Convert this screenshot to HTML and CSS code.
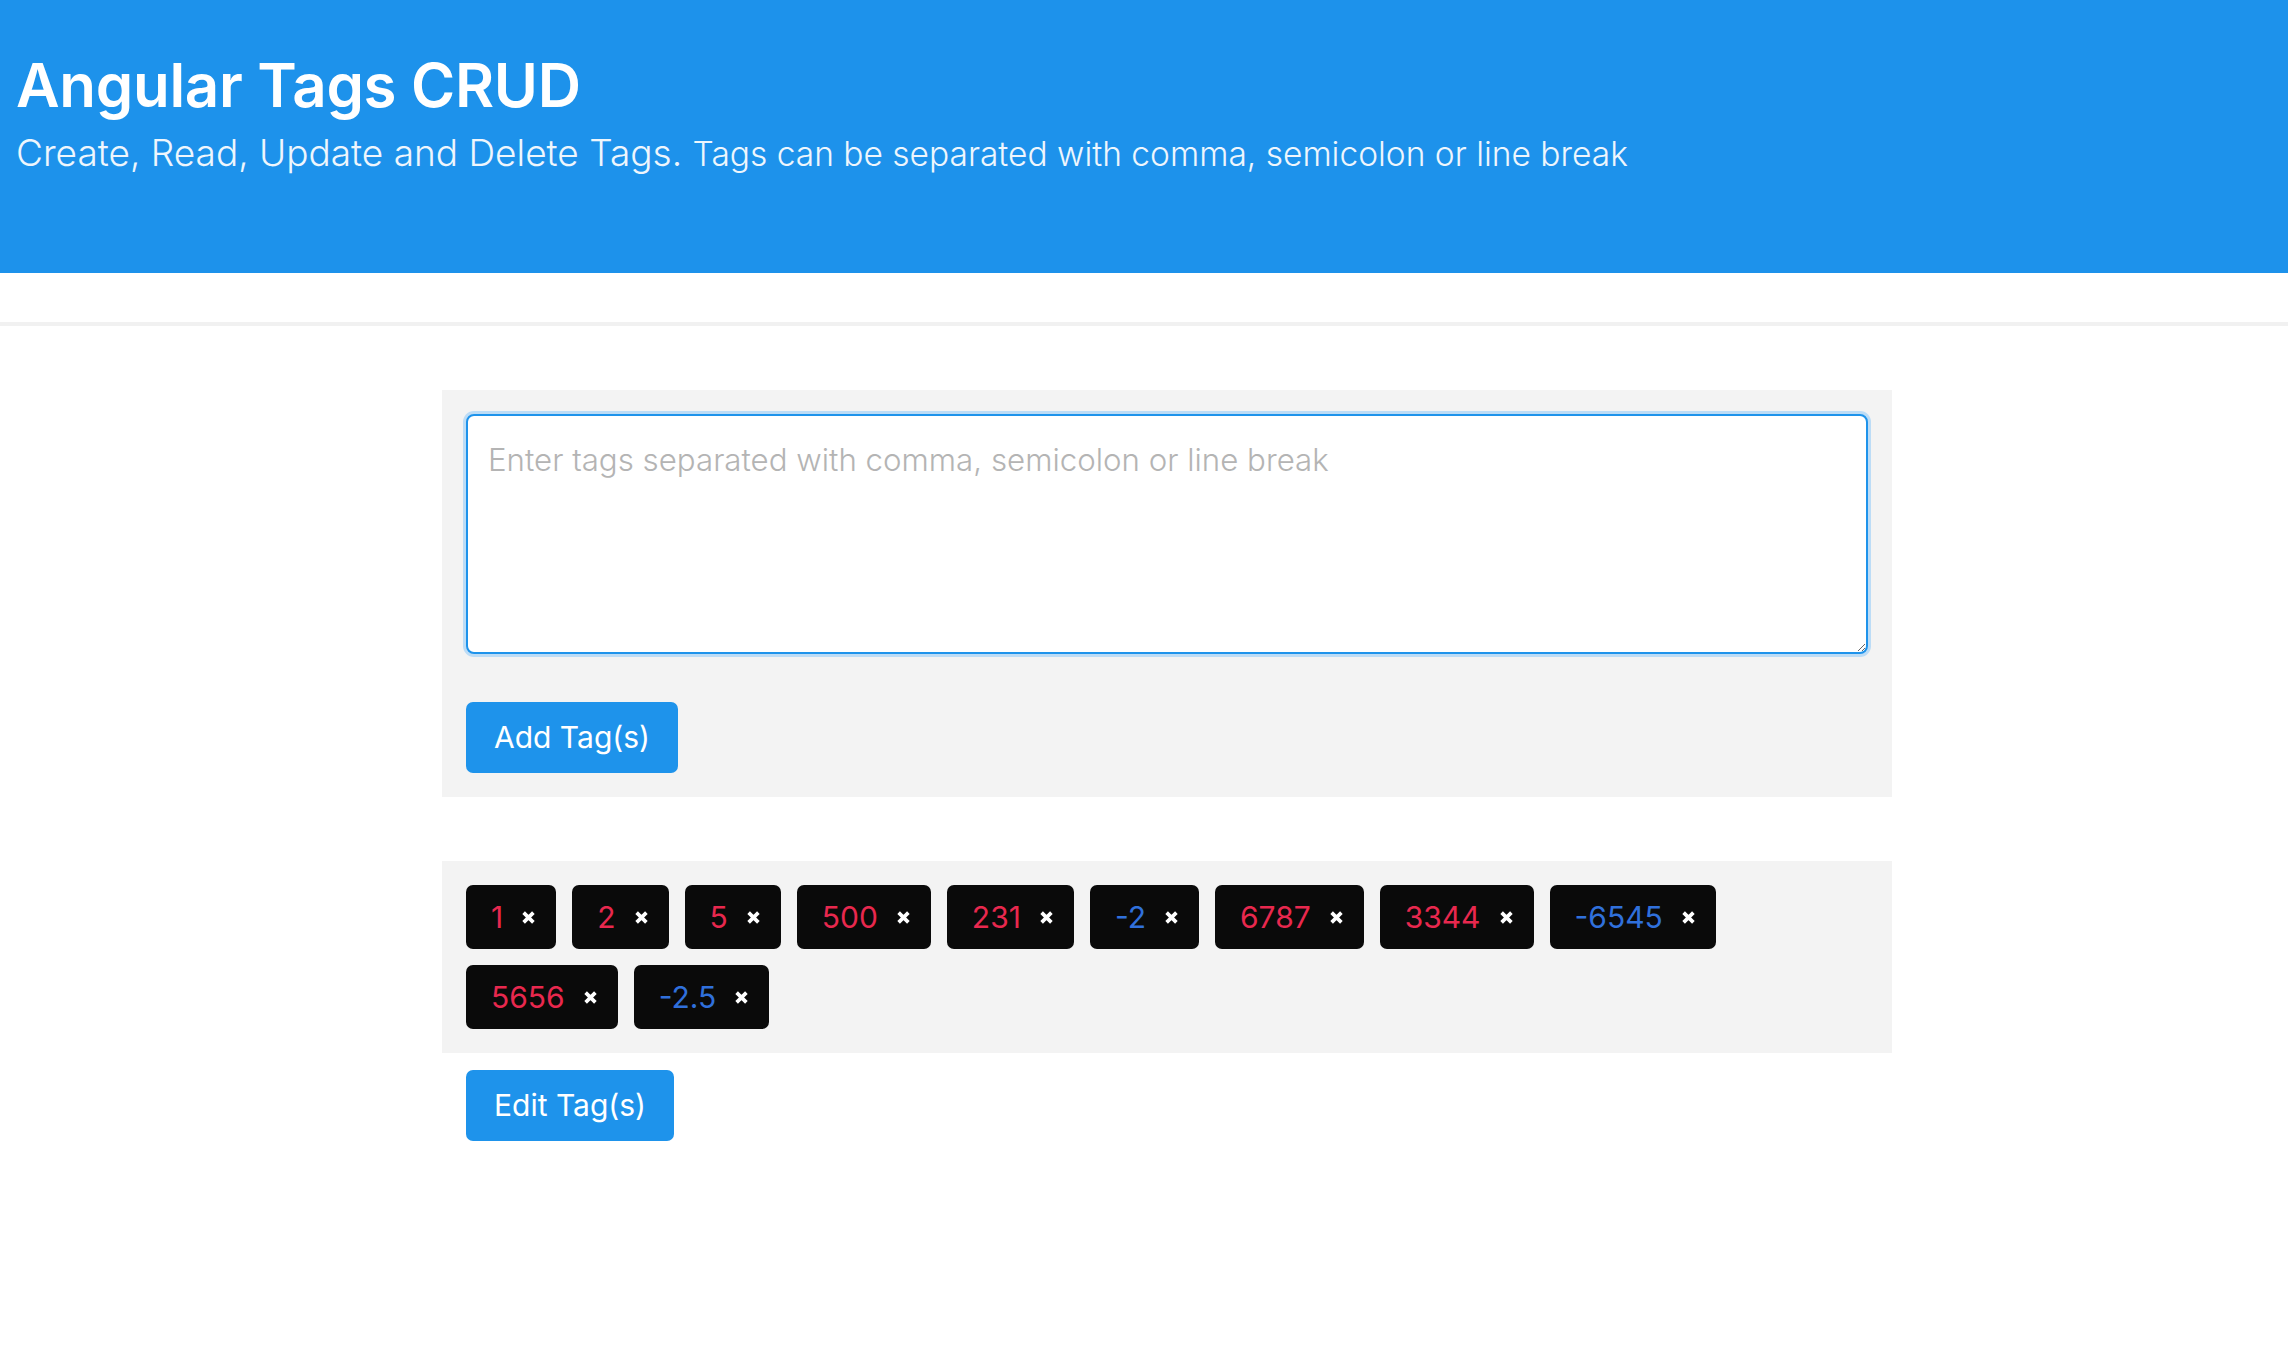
FILE: index.html
```html
<!DOCTYPE html>
<html lang="en">
<head>
<meta charset="utf-8">
<title>Angular Tags CRUD</title>
<link rel="stylesheet" href="styles.css">
</head>
<body>
<header class="hero">
  <h1 class="hero-title">Angular Tags CRUD</h1>
  <p class="hero-lead">Create, Read, Update and Delete Tags. <small class="hero-small">Tags can be separated with comma, semicolon or line break</small></p>
</header>
<div class="divider"></div>
<main class="container">
  <section class="panel">
    <textarea class="tag-input" placeholder="Enter tags separated with comma, semicolon or line break"></textarea>
    <button class="btn">Add Tag(s)</button>
  </section>
  <section class="panel tags">
    <span class="tag"><span class="num pos">1</span><svg class="x" viewBox="0 0 12 12"><path d="M1.5 1.5L10.5 10.5M10.5 1.5L1.5 10.5"/></svg></span>
    <span class="tag"><span class="num pos">2</span><svg class="x" viewBox="0 0 12 12"><path d="M1.5 1.5L10.5 10.5M10.5 1.5L1.5 10.5"/></svg></span>
    <span class="tag"><span class="num pos">5</span><svg class="x" viewBox="0 0 12 12"><path d="M1.5 1.5L10.5 10.5M10.5 1.5L1.5 10.5"/></svg></span>
    <span class="tag"><span class="num pos">500</span><svg class="x" viewBox="0 0 12 12"><path d="M1.5 1.5L10.5 10.5M10.5 1.5L1.5 10.5"/></svg></span>
    <span class="tag"><span class="num pos">231</span><svg class="x" viewBox="0 0 12 12"><path d="M1.5 1.5L10.5 10.5M10.5 1.5L1.5 10.5"/></svg></span>
    <span class="tag"><span class="num neg">-2</span><svg class="x" viewBox="0 0 12 12"><path d="M1.5 1.5L10.5 10.5M10.5 1.5L1.5 10.5"/></svg></span>
    <span class="tag"><span class="num pos">6787</span><svg class="x" viewBox="0 0 12 12"><path d="M1.5 1.5L10.5 10.5M10.5 1.5L1.5 10.5"/></svg></span>
    <span class="tag"><span class="num pos">3344</span><svg class="x" viewBox="0 0 12 12"><path d="M1.5 1.5L10.5 10.5M10.5 1.5L1.5 10.5"/></svg></span>
    <span class="tag"><span class="num neg">-6545</span><svg class="x" viewBox="0 0 12 12"><path d="M1.5 1.5L10.5 10.5M10.5 1.5L1.5 10.5"/></svg></span>
    <span class="tag"><span class="num pos">5656</span><svg class="x" viewBox="0 0 12 12"><path d="M1.5 1.5L10.5 10.5M10.5 1.5L1.5 10.5"/></svg></span>
    <span class="tag"><span class="num neg">-2.5</span><svg class="x" viewBox="0 0 12 12"><path d="M1.5 1.5L10.5 10.5M10.5 1.5L1.5 10.5"/></svg></span>
  </section>
  <div class="actions">
    <button class="btn">Edit Tag(s)</button>
  </div>
</main>
</body>
</html>
```

FILE: styles.css
```css
* { box-sizing: border-box; }

body {
  margin: 0;
  background: #ffffff;
  font-family: Inter, "Noto Sans", "Liberation Sans", sans-serif;
  color: #212529;
}

.hero {
  background: #1d92eb;
  color: #ffffff;
  height: 273px;
  padding: 49px 16px 0;
}

.hero-title {
  margin: 0 0 5px;
  font-size: 60px;
  line-height: 72px;
  font-weight: 600;
  letter-spacing: -0.3px;
}

.hero-lead {
  margin: 0;
  font-size: 37px;
  line-height: 54px;
  font-weight: 300;
  color: #eef6fd;
}

.hero-small {
  font-size: 33.5px;
  font-weight: 300;
}

.divider {
  height: 4px;
  margin-top: 49px;
  background: #f1f1f1;
}

.container {
  width: 1450px;
  margin: 64px 0 0 442px;
}

.panel {
  background: #f3f3f3;
  padding: 24px;
}

.tag-input {
  display: block;
  width: 100%;
  height: 240px;
  padding: 22px 20px;
  border: 2px solid #1e93eb;
  border-radius: 8px;
  box-shadow: 0 0 0 3px #bcdcf6;
  outline: none;
  font-family: Inter, "Noto Sans", "Liberation Sans", sans-serif;
  font-size: 31.25px;
  line-height: 45px;
  font-weight: 300;
  color: #333333;
  background: #ffffff;
  resize: vertical;
}

.tag-input::placeholder {
  color: #b4b4b4;
}

.btn {
  display: inline-block;
  margin-top: 48px;
  height: 71px;
  padding: 0 28px;
  border: none;
  border-radius: 7px;
  background: #1e93eb;
  color: #ffffff;
  font-family: Inter, "Noto Sans", "Liberation Sans", sans-serif;
  font-size: 30px;
  font-weight: 400;
  line-height: 71px;
}

.tags {
  margin-top: 64px;
  display: flex;
  flex-wrap: wrap;
  gap: 16px;
}

.tag {
  display: inline-flex;
  align-items: center;
  height: 64px;
  padding: 0 21px 0 25px;
  background: #0a0a0a;
  border-radius: 7px;
}

.num {
  font-size: 30px;
  line-height: 1;
  font-weight: 400;
}

.pos { color: #e8284e; }
.neg { color: #3070db; }

.x {
  width: 13px;
  height: 13px;
  margin-left: 19px;
  fill: none;
  stroke: #ffffff;
  stroke-width: 3.4;
}

.actions {
  padding: 0 24px;
}

.actions .btn {
  margin-top: 17px;
}
```
